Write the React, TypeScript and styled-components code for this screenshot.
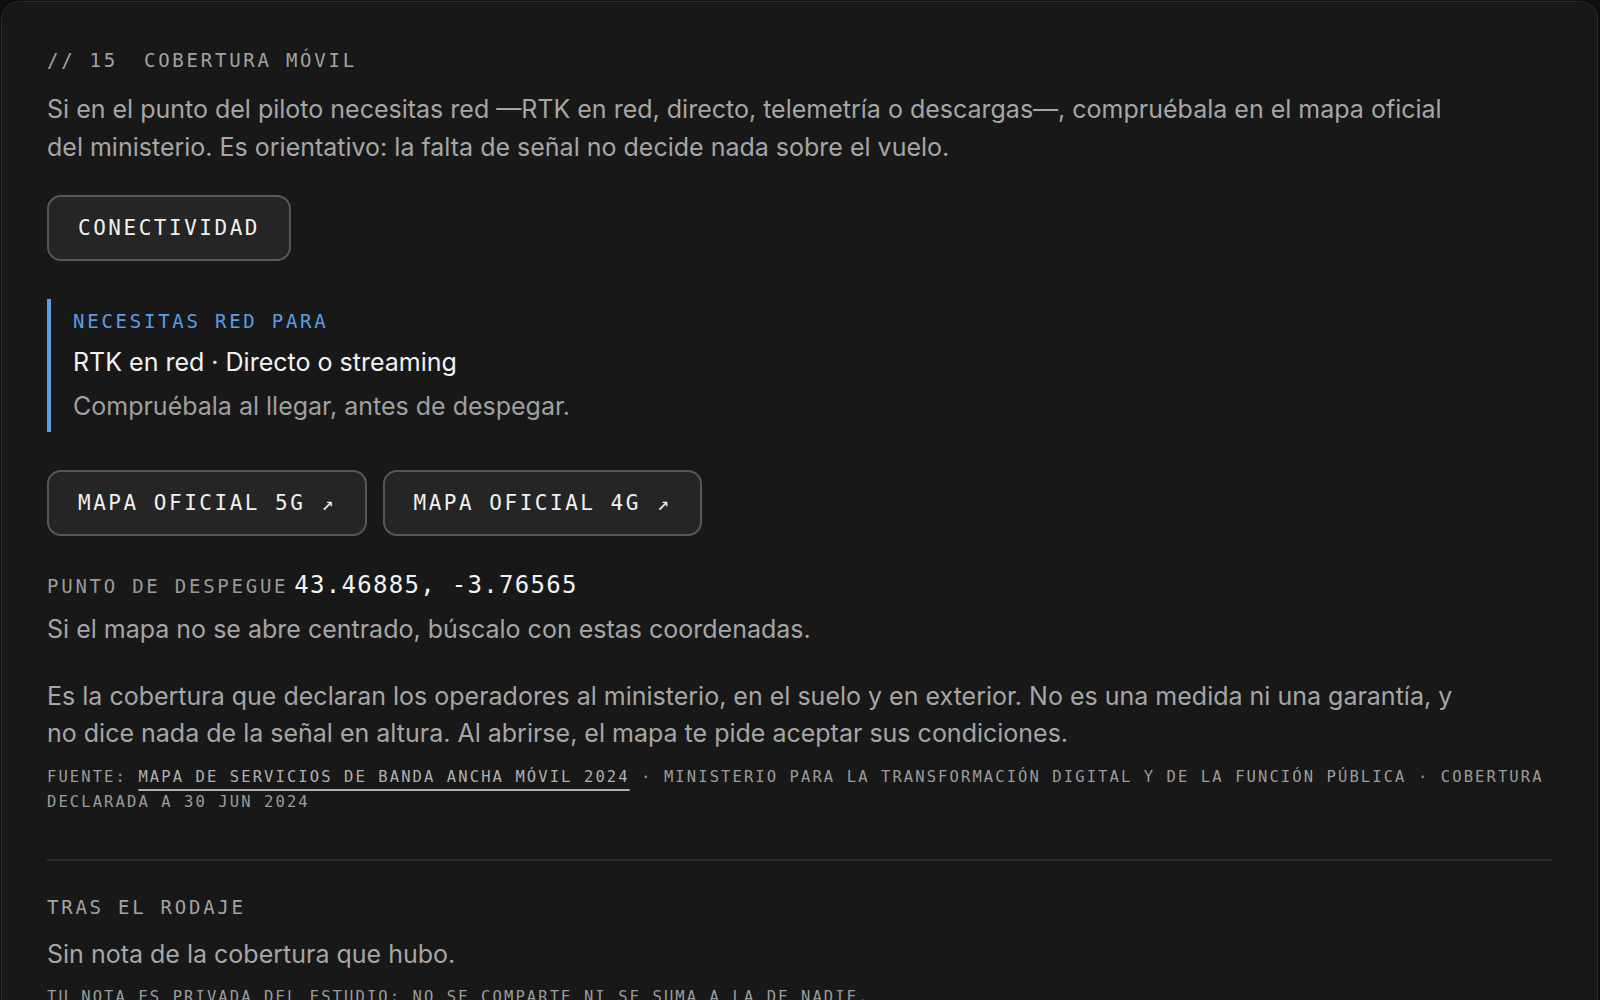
import React from "react";
import styled, { createGlobalStyle } from "styled-components";

const Global = createGlobalStyle`
  html, body { margin: 0; padding: 0; background: #0e0e0e; }
  body { overflow: hidden; }
  * { box-sizing: border-box; }
`;

const SANS = `"Inter", "Lato", "Noto Sans", sans-serif`;
const MONO = `"DejaVu Sans Mono", "Liberation Mono", monospace`;

const Card = styled.section`
  margin: 1px 2px 0 1px;
  min-height: 1100px;
  background: #181818;
  border: 1px solid #2a2a2a;
  border-radius: 18px;
  padding: 45px 45px 40px 45px;
  display: flex;
  flex-direction: column;
`;

const Eyebrow = styled.div<{ $mt?: number; $color?: string }>`
  display: flex;
  gap: 26px;
  font-family: ${MONO};
  font-size: 19px;
  line-height: 26px;
  letter-spacing: 0.145em;
  color: ${(p) => p.$color ?? "#a3a3a3"};
  text-transform: uppercase;
  margin-top: ${(p) => p.$mt ?? 0}px;
`;

const Para = styled.p<{ $mt?: number; $color?: string }>`
  margin: ${(p) => p.$mt ?? 0}px 0 0 0;
  max-width: 1420px;
  font-family: ${SANS};
  font-size: 25px;
  line-height: 37.5px;
  color: ${(p) => p.$color ?? "#a6a6a6"};
`;

const ButtonRow = styled.div<{ $mt?: number }>`
  display: flex;
  gap: 16px;
  margin-top: ${(p) => p.$mt ?? 0}px;
`;

const Pill = styled.button`
  height: 66px;
  padding: 0 29px 0 29px;
  background: #252525;
  border: 2px solid #575757;
  border-radius: 14px;
  color: #f0f0f0;
  font-family: ${MONO};
  font-size: 21px;
  letter-spacing: 0.12em;
  display: inline-flex;
  align-items: center;
  gap: 16px;
  cursor: pointer;
`;

const Arrow = styled.span`
  font-size: 20px;
  letter-spacing: 0;
  margin-right: 2px;
`;

const Callout = styled.div`
  margin-top: 38px;
  border-left: 4px solid #5a9fe4;
  padding: 9px 0 7px 22px;
  display: flex;
  flex-direction: column;
`;

const CalloutTitle = styled.div`
  font-family: ${SANS};
  font-size: 25px;
  line-height: 38px;
  color: #f2f2f2;
  margin-top: 9px;
`;

const CalloutNote = styled.div`
  font-family: ${SANS};
  font-size: 25px;
  line-height: 38px;
  color: #a0a0a0;
  margin-top: 6px;
`;

const CoordRow = styled.div`
  margin-top: 34px;
  display: flex;
  align-items: baseline;
  gap: 6px;
  line-height: 30px;
`;

const CoordLabel = styled.span`
  font-family: ${MONO};
  font-size: 19px;
  letter-spacing: 0.145em;
  color: #9a9a9a;
`;

const CoordValue = styled.span`
  font-family: ${MONO};
  font-size: 24px;
  letter-spacing: 1.3px;
  color: #f2f2f2;
`;

const Source = styled.div<{ $mt?: number }>`
  margin-top: ${(p) => p.$mt ?? 0}px;
  font-family: ${MONO};
  font-size: 15.5px;
  line-height: 25px;
  letter-spacing: 0.135em;
  color: #9c9c9c;
  text-transform: uppercase;
`;

const SourceLink = styled.a`
  color: #b0b0b0;
  text-decoration: underline;
  text-decoration-thickness: 2px;
  text-underline-offset: 7px;
`;

const Divider = styled.hr`
  margin: 44px 0 0 0;
  border: 0;
  border-top: 2px solid #2b2b2b;
  width: 100%;
`;

export default function App() {
  return (
    <>
      <Global />
      <Card>
        <Eyebrow>
          <span>// 15</span>
          <span>COBERTURA MÓVIL</span>
        </Eyebrow>
        <Para $mt={18}>
          Si en el punto del piloto necesitas red —RTK en red, directo, telemetría o descargas—, compruébala en el mapa
          oficial del ministerio. Es orientativo: la falta de señal no decide nada sobre el vuelo.
        </Para>
        <ButtonRow $mt={29}>
          <Pill>CONECTIVIDAD</Pill>
        </ButtonRow>
        <Callout>
          <Eyebrow $color="#5a9fe4">NECESITAS RED PARA</Eyebrow>
          <CalloutTitle>RTK en red · Directo o streaming</CalloutTitle>
          <CalloutNote>Compruébala al llegar, antes de despegar.</CalloutNote>
        </Callout>
        <ButtonRow $mt={38}>
          <Pill>
            MAPA OFICIAL 5G<Arrow>↗</Arrow>
          </Pill>
          <Pill>
            MAPA OFICIAL 4G<Arrow>↗</Arrow>
          </Pill>
        </ButtonRow>
        <CoordRow>
          <CoordLabel>PUNTO DE DESPEGUE</CoordLabel>
          <CoordValue>43.46885, -3.76565</CoordValue>
        </CoordRow>
        <Para $mt={10}>Si el mapa no se abre centrado, búscalo con estas coordenadas.</Para>
        <Para $mt={29}>
          Es la cobertura que declaran los operadores al ministerio, en el suelo y en exterior. No es una medida ni una
          garantía, y no dice nada de la señal en altura. Al abrirse, el mapa te pide aceptar sus condiciones.
        </Para>
        <Source $mt={12}>
          FUENTE: <SourceLink href="#">MAPA DE SERVICIOS DE BANDA ANCHA MÓVIL 2024</SourceLink> · MINISTERIO PARA LA
          TRANSFORMACIÓN DIGITAL Y DE LA FUNCIÓN PÚBLICA · COBERTURA DECLARADA A 30 JUN 2024
        </Source>
        <Divider />
        <Eyebrow $mt={33}>TRAS EL RODAJE</Eyebrow>
        <Para $mt={16}>Sin nota de la cobertura que hubo.</Para>
        <Source $mt={12}>TU NOTA ES PRIVADA DEL ESTUDIO: NO SE COMPARTE NI SE SUMA A LA DE NADIE.</Source>
      </Card>
    </>
  );
}
